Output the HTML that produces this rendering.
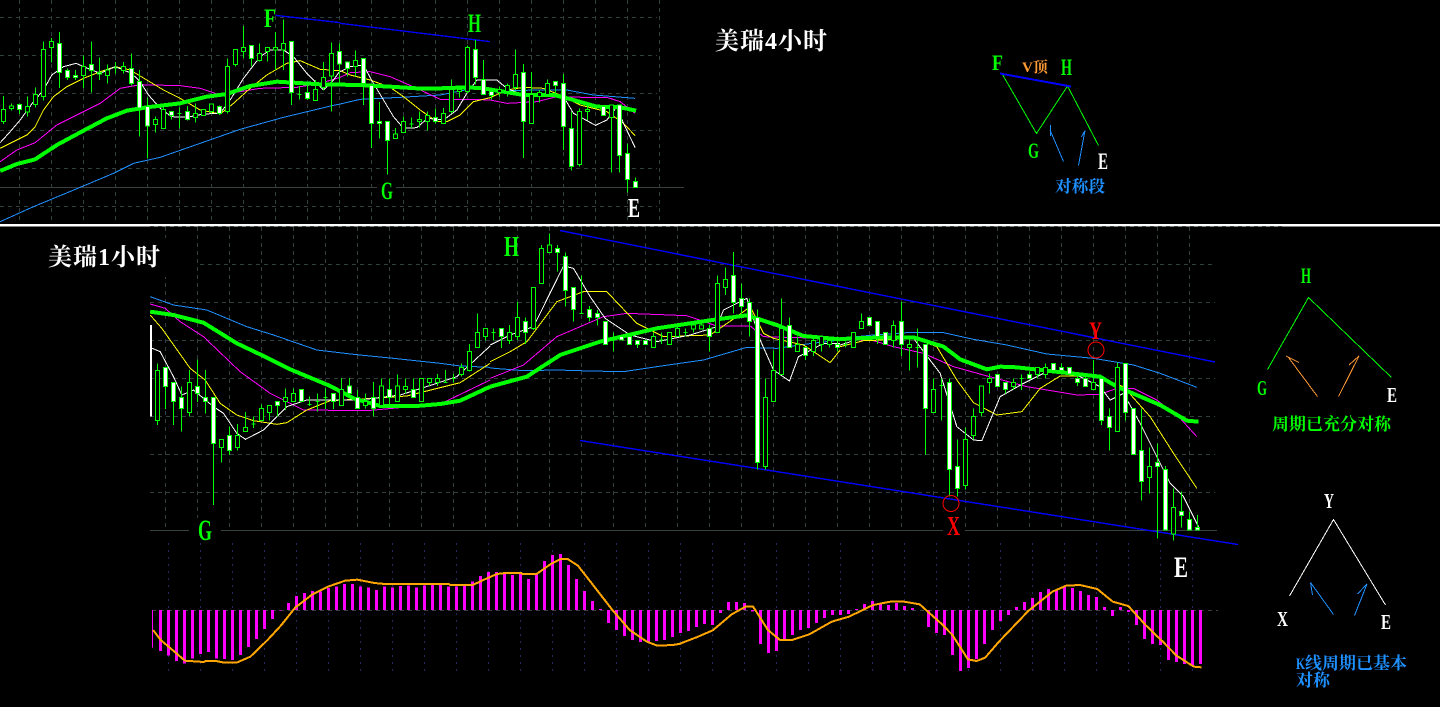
<!DOCTYPE html>
<html><head><meta charset="utf-8"><title>美瑞</title>
<style>
html,body{margin:0;padding:0;background:#000;width:1440px;height:707px;overflow:hidden}
svg{display:block}
.l{fill:none;stroke-width:3;shape-rendering:crispEdges;stroke-linejoin:round}
.g{fill:none;stroke:#2f3f3c;stroke-width:1;stroke-dasharray:4 4;shape-rendering:crispEdges}
.w{fill:none;stroke:#0f0;stroke-width:3;shape-rendering:crispEdges}
.h{fill:#000;stroke:#0f0;stroke-width:3;shape-rendering:crispEdges}
.f{fill:#fff;stroke:#0f0;stroke-width:3;shape-rendering:crispEdges}
.t{fill:none;stroke-width:1;shape-rendering:crispEdges}
.a{font-family:"Liberation Serif",serif;font-weight:bold}
.c{font-family:"Liberation Serif","Noto Serif CJK SC",serif;font-weight:bold}
</style></head><body>
<svg width="1440" height="707" viewBox="0 0 1440 707" xmlns="http://www.w3.org/2000/svg">
<rect width="1440" height="707" fill="#000"/>

<!-- top chart grid -->
<path class="g" d="M0 17.5H657M0 55.5H657M0 93.5H657M0 130.5H657M0 168.5H657M0 206.5H657"/>
<path class="g" d="M19.5 0V224M51.5 0V224M83.5 0V224M115.5 0V224M147.5 0V224M179.5 0V224M211.5 0V224M243.5 0V224M275.5 0V224M307.5 0V224M339.5 0V224M371.5 0V224M403.5 0V224M435.5 0V224M467.5 0V224M499.5 0V224M531.5 0V224M563.5 0V224M595.5 0V224M627.5 0V224M659.5 0V224"/>
<path d="M0 187.5H684" stroke="#3a3f3f" stroke-width="1" shape-rendering="crispEdges"/>

<!-- top chart MAs -->
<g transform="translate(.1667,0) scale(.33333)">
<path class="l" stroke="#1e90ff" d="M0 665L100 620L240 562L340 520L400 490L480 472L600 430L720 388L850 352L1000 316L1020 312"/>
<path class="l" stroke="#f0f" d="M0 485L50 450L105 428L170 375L250 335L300 310L360 265L420 254L540 257L600 265L660 285L720 275L780 265L890 262L960 250L1020 232"/>
<path class="l" stroke="#ff0" d="M0 445L40 425L80 405L105 380L130 330L160 290L200 260L250 235L300 215L345 200L390 210L440 240L490 270L540 295L600 330L660 342L700 310L750 265L800 225L860 190L900 182L960 208L1020 212"/>
<path class="l" stroke="#fff" d="M0 428L30 395L60 360L100 305L130 270L155 225L190 200L228 190L250 200L300 220L345 200L370 210L394 220L420 245L445 285L480 325L514 350L560 352L610 342L660 340L690 300L730 235L780 170L810 150L850 150L880 170L920 220L970 270L1000 240L1020 212"/>
<path class="l" stroke="#0f0" style="stroke-width:12" d="M0 513L50 492L105 478L170 435L250 392L320 355L380 332L440 322L540 310L620 290L680 282L750 258L830 245L880 248L960 253L1020 254"/>
<path class="l" stroke="#00f" style="stroke-width:4" d="M826 46L1020 68"/>
</g>
<g transform="translate(340.1667,0) scale(.33333)">
<path class="l" stroke="#1e90ff" d="M0 312L60 298L180 292L300 285L400 265L500 272L600 270L680 270L760 285L885 295"/>
<path class="l" stroke="#f0f" d="M0 232L30 218L90 215L150 230L230 265L300 298L390 298L450 300L500 310L590 305L650 290L730 292L800 292L840 305L885 340"/>
<path class="l" stroke="#ff0" d="M0 212L30 225L90 240L150 262L190 290L240 330L290 365L320 365L360 345L400 305L450 293L500 270L550 262L610 265L660 285L720 315L800 335L850 370L885 407"/>
<path class="l" stroke="#fff" d="M0 215L30 200L70 195L94 240L130 300L160 350L190 385L230 383L262 355L310 360L350 330L380 280L410 240L470 240L500 265L550 285L598 290L640 280L670 290L700 340L766 376L800 360L830 320L850 370L885 443"/>
<path class="l" stroke="#0f0" style="stroke-width:12" d="M0 254L60 255L150 260L230 265L300 265L380 262L430 265L490 275L550 285L640 285L700 300L770 320L840 322L888 332"/>
<path class="l" stroke="#00f" style="stroke-width:4" d="M0 70L450 125"/>
</g>

<!-- top chart candles -->
<g transform="translate(.1667,0) scale(.33333)">
<path class="w" d="M10 288V372M34 310V332M58 310V342M82 290V350M106 262V322M130 124V302M154 114V188M178 96V264M202 205V240M226 210V240M250 166V264M274 124V278M298 172V240M322 194V250M346 186V220M370 186V220M394 160V256M418 210V410M442 292V476M466 350V398M490 320V386M514 335V358M538 322V386M562 318V362M586 310V368M610 328V346M634 312V340M658 316V345M682 175V340M706 148V200M730 78V174M754 136V200M778 130V184M802 142V184M826 96V210M850 58V210M874 124V315M898 258V298M922 250V300M946 240V302M970 186V272M994 128V335M1018 130V250M340 204H352M532 340H544M892 284H904"/>
<path class="h" d="M4 328h12V364h-12zM28 318h12V326h-12zM76 320h12V336h-12zM100 284h12V314h-12zM124 148h12V290h-12zM148 124h12V142h-12zM244 200h12V226h-12zM316 210h12V226h-12zM364 200h12V212h-12zM460 358h12V374h-12zM484 328h12V386h-12zM580 340h12V352h-12zM604 328h12V346h-12zM628 312h12V334h-12zM676 199h12V334h-12zM700 148h12V194h-12zM724 142h12V155h-12zM772 160h12V182h-12zM796 142h12V155h-12zM820 142h12V150h-12zM844 130h12V150h-12zM940 268h12V302h-12zM964 232h12V262h-12zM988 160h12V228h-12z"/>
<path class="f" d="M52 314h12V328h-12zM172 130h12V218h-12zM196 212h12V232h-12zM220 227h12V232h-12zM268 194h12V212h-12zM292 218h12V222h-12zM388 206h12V250h-12zM412 244h12V324h-12zM436 320h12V378h-12zM508 335h12V346h-12zM556 335h12V358h-12zM652 320h12V340h-12zM748 136h12V176h-12zM868 124h12V277h-12zM916 278h12V296h-12zM1012 154h12V192h-12z"/>
</g>
<g transform="translate(340.1667,0) scale(.33333)">
<path class="w" d="M22 186V230M46 152V230M70 175V315M94 257V444M118 306V416M142 364V524M166 384V416M190 350V398M214 352V384M238 334V382M262 334V392M286 326V370M310 324V372M334 238V340M358 256V292M382 136V280M406 120V254M430 180V284M454 270V298M478 260V290M502 250V290M526 148V270M550 192V474M574 216V370M598 270V308M622 238V290M646 244V280M670 222V450M694 334V512M718 326V500M742 308V362M790 320V346M814 315V518M838 315V518M862 430V578M886 532V562M208 372H220"/>
<path class="h" d="M40 182h12V200h-12zM160 402h12V416h-12zM184 364h12V398h-12zM232 358h12V364h-12zM256 346h12V364h-12zM304 340h12V370h-12zM328 268h12V335h-12zM352 268h12V274h-12zM376 142h12V275h-12zM472 268h12V278h-12zM496 256h12V274h-12zM520 223h12V262h-12zM568 284h12V370h-12zM592 278h12V290h-12zM616 250h12V284h-12zM712 334h12V494h-12zM736 328h12V334h-12zM808 315h12V352h-12z"/>
<path class="f" d="M16 186h12V206h-12zM64 175h12V250h-12zM88 257h12V370h-12zM112 364h12V370h-12zM136 364h12V422h-12zM280 352h12V364h-12zM400 148h12V233h-12zM424 238h12V284h-12zM448 274h12V286h-12zM544 217h12V364h-12zM640 244h12V256h-12zM664 250h12V380h-12zM688 385h12V500h-12zM784 320h12V346h-12zM832 315h12V466h-12zM856 460h12V538h-12zM880 544h12V562h-12z"/>
</g>

<!-- divider -->
<rect x="0" y="224" width="1440" height="2.5" fill="#fff"/>

<!-- lower chart grid -->
<path class="g" d="M150 226.5H1286M200 264.5H1215M150 302.5H1215M150 340.5H1215M150 378.5H1215M150 416.5H1215M150 454.5H1215M150 492.5H1215"/>
<path class="g" d="M165.5 227V530M197.5 227V530M229.5 227V530M261.5 227V530M293.5 227V530M325.5 227V530M357.5 227V530M389.5 227V530M421.5 227V530M453.5 227V530M485.5 227V530M517.5 227V530M549.5 227V530M581.5 227V530M613.5 227V530M645.5 227V530M677.5 227V530M709.5 227V530M741.5 227V530M773.5 227V530M805.5 227V530M837.5 227V530M869.5 227V530M901.5 227V530M933.5 227V530M965.5 227V530M997.5 227V530M1029.5 227V530M1061.5 227V530M1093.5 227V530M1125.5 227V530M1157.5 227V530M1189.5 227V530"/>
<rect x="40" y="238" width="130" height="39" fill="#000"/>
<path d="M150 530.5H1217" stroke="#344240" stroke-width="1" shape-rendering="crispEdges"/>

<!-- indicator grid -->
<path fill="none" stroke="#24285a" stroke-width="1" stroke-dasharray="2 5" shape-rendering="crispEdges" d="M168.5 543V675M200.5 543V675M232.5 543V675M264.5 543V675M296.5 543V675M328.5 543V675M360.5 543V675M392.5 543V675M424.5 543V675M456.5 543V675M488.5 543V675M520.5 543V675M552.5 543V675M584.5 543V675M616.5 543V675M648.5 543V675M680.5 543V675M712.5 543V675M744.5 543V675M776.5 543V675M808.5 543V675M840.5 543V675M872.5 543V675M904.5 543V675M936.5 543V675M968.5 543V675M1000.5 543V675M1032.5 543V675M1064.5 543V675M1096.5 543V675M1128.5 543V675M1160.5 543V675M1192.5 543V675"/>
<path d="M152 610.5H1218" stroke="#3a3f3f" stroke-width="1" stroke-dasharray="4 4" shape-rendering="crispEdges"/>

<!-- lower chart MAs -->
<g transform="translate(140.1667,230) scale(.33333)">
<path class="l" stroke="#1e90ff" d="M30 200L100 225L200 240L320 290L400 315L530 360L640 373L760 385L900 400L960 408L1050 412"/>
<path class="l" stroke="#f0f" d="M30 222L75 235L120 275L190 320L300 425L390 490L490 540L680 542L900 522L1050 450"/>
<path class="l" stroke="#ff0" d="M30 255L65 295L150 415L195 450L240 520L290 555L340 572L410 583L440 578L500 540L570 512L700 505L800 498L880 478L960 458L1050 400"/>
<path class="l" stroke="#fff" d="M36 355L60 365L100 440L125 495L160 480L220 530L250 550L290 610L316 628L370 600L440 530L500 510L660 510L780 495L890 460L950 440L1050 348"/>
<path class="l" stroke="#0f0" style="stroke-width:12" d="M30 245L100 255L190 278L290 340L370 378L450 418L570 468L640 505L720 528L830 528L900 522L960 512L1050 470"/>
</g>
<g transform="translate(490.1667,230) scale(.33333)">
<path class="l" stroke="#1e90ff" d="M0 414L100 422L200 420L300 423L400 425L500 410L640 390L770 352L860 355L950 342L1050 330"/>
<path class="l" stroke="#f0f" d="M0 445L100 405L200 320L340 260L410 250L590 257L680 288L780 288L820 320L1000 325L1050 330"/>
<path class="l" stroke="#ff0" d="M0 395L60 365L110 335L200 215L280 185L350 185L440 280L520 320L660 315L740 260L780 230L820 310L850 325L940 345L1020 398L1050 360"/>
<path class="l" stroke="#fff" d="M0 345L60 315L130 290L220 108L250 115L300 200L345 265L420 315L500 335L600 315L680 290L700 240L770 205L810 330L850 420L898 453L925 380L1000 340L1050 340"/>
<path class="l" stroke="#0f0" style="stroke-width:12" d="M0 470L110 440L210 375L330 335L500 295L680 268L770 256L860 285L940 318L1050 328"/>
</g>
<g transform="translate(840.1667,230) scale(.33333)">
<path class="l" stroke="#1e90ff" d="M0 325L100 315L200 308L310 308L400 328L500 345L620 372L760 385L880 405L960 430L1070 472"/>
<path class="l" stroke="#f0f" d="M0 328L100 332L160 350L250 370L340 410L430 435L560 470L710 495L780 493L830 475L880 475L950 510L1020 565L1070 620"/>
<path class="l" stroke="#ff0" d="M0 350L70 332L130 330L220 325L290 350L350 450L400 518L470 555L545 545L600 475L660 438L760 437L850 470L930 560L1000 670L1070 775"/>
<path class="l" stroke="#fff" d="M0 345L80 320L220 325L300 430L350 590L400 630L425 632L480 500L550 460L620 425L700 430L780 470L810 510L850 490L900 580L950 680L990 760L1030 800L1075 890"/>
<path class="l" stroke="#0f0" style="stroke-width:12" d="M0 327L130 322L220 322L310 350L360 388L440 418L480 410L530 412L620 422L780 440L830 470L960 525L1040 572L1075 575"/>
</g>

<!-- channel lines -->
<path d="M560 230.5L1215 362M580 440.5L1238 544.5" fill="none" stroke="#00f" stroke-width="1.4" shape-rendering="crispEdges"/>

<!-- lower chart candles -->
<g transform="translate(140.1667,230) scale(.33333)">
<path d="M32 285V560" fill="none" stroke="#fff" stroke-width="6" shape-rendering="crispEdges"/>
<path class="w" d="M52 400V585M76 412V537M100 457V585M124 470V605M148 420V560M172 388V516M196 420V550M220 502V825M244 628V698M268 590V675M292 582V662M316 546V604M340 560V594M364 524V572M388 526V572M412 514V560M436 476V540M460 476V514M484 478V514M508 500V528M532 490V545M556 476V537M580 490V537M604 444V526M628 444V500M652 480V536M676 490V536M700 456V560M724 445V526M748 445V526M772 433V514M796 445V490M820 445V503M844 445V514M868 445V468M892 432V468M916 420V458M940 432V458M964 400V440M988 342V425M1012 250V352M1036 295V332M334 582H346M502 524H514M526 514H538M550 502H562M910 458H922M934 445H946"/>
<path class="h" d="M46 421h12V571h-12zM142 457h12V548h-12zM238 628h12V652h-12zM286 616h12V652h-12zM310 592h12V604h-12zM358 536h12V572h-12zM382 526h12V548h-12zM430 502h12V514h-12zM454 490h12V514h-12zM598 478h12V526h-12zM670 514h12V526h-12zM718 468h12V526h-12zM766 468h12V514h-12zM790 470h12V478h-12zM838 445h12V514h-12zM862 445h12V458h-12zM886 445h12V458h-12zM958 412h12V433h-12zM982 365h12V421h-12zM1006 307h12V352h-12zM1030 295h12V320h-12z"/>
<path class="f" d="M70 412h12V470h-12zM94 457h12V514h-12zM118 502h12V535h-12zM166 469h12V490h-12zM190 502h12V514h-12zM214 502h12V640h-12zM262 616h12V661h-12zM406 514h12V526h-12zM478 478h12V514h-12zM574 490h12V514h-12zM622 468h12V490h-12zM646 502h12V536h-12zM694 502h12V535h-12zM742 478h12V503h-12zM814 478h12V502h-12z"/>
</g>
<g transform="translate(490.1667,230) scale(.33333)">
<path class="w" d="M10 295V332M34 296V354M58 285V342M82 216V330M106 262V342M130 172V300M154 45V160M178 10V67M202 45V125M226 68V230M250 172V275M274 136V250M298 228V274M322 240V286M346 274V343M370 308V365M394 320V330M418 320V343M442 332V354M466 332V343M490 308V353M514 308V342M538 307V343M562 285V320M586 295V320M610 285V308M634 275V297M658 285V365M682 136V307M706 112V195M730 66V250M754 160V250M778 205V320M802 238V718M826 445V718M850 362V514M874 205V433M898 262V352M922 320V365M946 352V390M970 320V378M994 320V365M1018 320V352M1042 320V365M4 307H16M268 250H280M364 330H376M508 330H520M580 308H592"/>
<path class="h" d="M52 307h12V331h-12zM76 262h12V319h-12zM124 172h12V295h-12zM148 55h12V160h-12zM172 45h12V67h-12zM484 320h12V353h-12zM532 307h12V343h-12zM556 295h12V319h-12zM604 285h12V297h-12zM628 285h12V297h-12zM676 160h12V307h-12zM700 148h12V172h-12zM820 502h12V710h-12zM844 421h12V514h-12zM868 295h12V433h-12zM916 343h12V365h-12zM964 331h12V365h-12zM988 320h12V343h-12zM1012 331h12V343h-12z"/>
<path class="f" d="M28 296h12V319h-12zM100 274h12V307h-12zM196 55h12V67h-12zM220 79h12V181h-12zM244 172h12V238h-12zM292 238h12V262h-12zM316 250h12V262h-12zM340 274h12V343h-12zM388 320h12V330h-12zM412 320h12V343h-12zM436 332h12V343h-12zM460 332h12V343h-12zM652 296h12V319h-12zM724 136h12V217h-12zM748 205h12V229h-12zM772 217h12V274h-12zM796 262h12V697h-12zM892 286h12V352h-12zM940 352h12V376h-12zM1036 343h12V352h-12z"/>
</g>
<g transform="translate(840.1667,230) scale(.33333)">
<path class="w" d="M16 335V352M40 308V352M64 250V296M88 262V286M112 274V342M136 308V343M160 272V352M184 216V378M208 320V422M232 295V412M256 343V675M280 445V548M304 445V572M328 445V800M352 628V800M376 592V778M400 536V628M424 468V560M448 430V490M472 433V469M496 457V490M520 445V480M544 433V480M568 424V445M592 412V445M616 400V445M640 400V422M664 400V433M688 412V433M712 433V468M736 433V469M760 390V479M784 445V585M808 535V662M832 398V604M856 400V572M880 536V673M904 536V812M928 652V790M952 640V926M976 708V900M1000 775V932M1024 785V893M1048 844V900M1072 855V900M10 343H22M226 352H238M298 467H310M538 445H550"/>
<path class="h" d="M34 308h12V352h-12zM58 274h12V296h-12zM154 286h12V331h-12zM202 343h12V352h-12zM274 478h12V548h-12zM370 628h12V767h-12zM394 560h12V616h-12zM418 468h12V548h-12zM442 445h12V457h-12zM514 457h12V469h-12zM586 412h12V433h-12zM610 412h12V433h-12zM754 457h12V479h-12zM826 412h12V604h-12zM922 710h12V742h-12zM994 832h12V912h-12z"/>
<path class="f" d="M82 262h12V286h-12zM106 274h12V319h-12zM130 308h12V343h-12zM178 274h12V343h-12zM250 343h12V535h-12zM322 458h12V718h-12zM346 710h12V775h-12zM466 433h12V469h-12zM490 457h12V478h-12zM562 433h12V445h-12zM634 400h12V422h-12zM658 412h12V422h-12zM682 412h12V432h-12zM706 445h12V457h-12zM730 445h12V469h-12zM778 445h12V571h-12zM802 560h12V592h-12zM850 400h12V548h-12zM874 536h12V673h-12zM898 661h12V754h-12zM946 698h12V710h-12zM970 718h12V900h-12zM1018 844h12V856h-12zM1042 868h12V900h-12zM1066 893h12V900h-12z"/>
</g>

<!-- MACD bars -->
<g transform="translate(0,545) scale(1,.33333)">
<path d="M152.5 195V308" stroke="#f0f" stroke-width="1" fill="none" shape-rendering="crispEdges"/>
<path fill="none" stroke="#f0f" stroke-width="3" shape-rendering="crispEdges" d="M160.5 195V318M168.5 195V332M176.5 195V348M184.5 195V356M192.5 195V340M200.5 195V327M208.5 195V321M216.5 195V340M224.5 195V342M232.5 195V345M240.5 195V330M248.5 195V306M256.5 195V282M264.5 195V252M272.5 195V222M280.5 195V197M288.5 195V174M296.5 195V153M304.5 195V144M312.5 195V138M320.5 195V140M328.5 195V129M336.5 195V125M344.5 195V117M352.5 195V117M360.5 195V125M368.5 195V128M376.5 195V135M384.5 195V125M392.5 195V128M400.5 195V123M408.5 195V122M416.5 195V128M424.5 195V122M432.5 195V117M440.5 195V117M448.5 195V125M456.5 195V125M464.5 195V120M472.5 195V110M480.5 195V93M488.5 195V81M496.5 195V81M504.5 195V86M512.5 195V90M520.5 195V86M528.5 195V102M536.5 195V86M544.5 195V48M552.5 195V30M560.5 195V27M568.5 195V60M576.5 195V102M584.5 195V138M592.5 195V168M600.5 195V192M608.5 195V234M616.5 195V255M624.5 195V273M632.5 195V285M640.5 195V291M648.5 195V291M656.5 195V288M664.5 195V285M672.5 195V276M680.5 195V264M688.5 195V258M696.5 195V246M704.5 195V237M712.5 195V240M720.5 195V204M728.5 195V171M736.5 195V171M744.5 195V174M752.5 195V200M760.5 195V297M768.5 195V324M776.5 195V318M784.5 195V282M792.5 195V270M800.5 195V255M808.5 195V249M816.5 195V234M824.5 195V219M832.5 195V210M840.5 195V210M848.5 195V207M856.5 195V192M864.5 195V177M872.5 195V168M880.5 195V175M888.5 195V180M896.5 195V174M904.5 195V183M912.5 195V189M920.5 195V195M928.5 195V246M936.5 195V264M944.5 195V270M952.5 195V330M960.5 195V378M968.5 195V369M976.5 195V342M984.5 195V297M992.5 195V255M1000.5 195V228M1008.5 195V210M1016.5 195V186M1024.5 195V171M1032.5 195V159M1040.5 195V141M1048.5 195V132M1056.5 195V135M1064.5 195V126M1072.5 195V129M1080.5 195V138M1088.5 195V150M1096.5 195V156M1104.5 195V186M1112.5 195V213M1120.5 195V186M1128.5 195V201M1136.5 195V240M1144.5 195V282M1152.5 195V297M1160.5 195V300M1168.5 195V345M1176.5 195V351M1184.5 195V357M1192.5 195V361M1200.5 195V357"/>
</g>
<!-- signal line -->
<g transform="translate(140,545) scale(.34483,.33333)">
<path fill="none" stroke="#ffa500" stroke-width="6" shape-rendering="crispEdges" d="M38 255L60 285L100 320L130 347L185 351L190 348L220 348L245 353L280 353L320 335L370 285L410 240L450 188L500 148L545 125L595 107L630 104L680 114L710 117L895 117L900 120L965 120L1000 103L1035 87L1060 84L1105 84L1110 87L1150 87L1190 58L1220 42L1240 42L1270 62L1310 115L1370 195L1420 255L1470 290L1500 302L1545 300L1568 296"/>
</g>
<g transform="translate(680,545) scale(.34483,.33333)">
<path fill="none" stroke="#ffa500" stroke-width="6" shape-rendering="crispEdges" d="M0 296L50 276L95 256L150 208L190 185L212 185L255 255L290 285L325 285L375 268L440 230L490 215L560 180L610 170L650 170L695 178L760 238L790 270L835 343L860 348L885 338L925 290L1010 198L1080 140L1120 122L1160 120L1210 132L1255 170L1300 183L1350 240L1400 290L1440 332L1490 365L1512 367"/>
</g>

<!-- label backgrounds -->
<rect x="377" y="181" width="19" height="20" fill="#000"/>
<rect x="189" y="518" width="32" height="24" fill="#000"/>
<rect x="943" y="517" width="22" height="20" fill="#000"/>

<!-- red markers -->
<circle cx="1096" cy="350" r="8" fill="none" stroke="#f00" stroke-width="1"/>
<circle cx="951" cy="503.5" r="8" fill="none" stroke="#f00" stroke-width="1"/>

<!-- chart letters -->
<g class="a" text-anchor="start">
<text x="264" y="27" font-size="26" fill="#0f0" textLength="12" lengthAdjust="spacingAndGlyphs">F</text>
<text x="468" y="32" font-size="26" fill="#0f0" textLength="13" lengthAdjust="spacingAndGlyphs">H</text>
<text x="381" y="199" font-size="25" fill="#0f0" textLength="12" lengthAdjust="spacingAndGlyphs">G</text>
<text x="628" y="217" font-size="27" fill="#fff" textLength="12" lengthAdjust="spacingAndGlyphs">E</text>
<text x="504" y="256" font-size="29" fill="#0f0" textLength="15" lengthAdjust="spacingAndGlyphs">H</text>
<text x="198" y="540" font-size="30" fill="#0f0" textLength="14" lengthAdjust="spacingAndGlyphs">G</text>
<text x="1089" y="339" font-size="25" fill="#f00" textLength="13" lengthAdjust="spacingAndGlyphs">Y</text>
<text x="947" y="535" font-size="27" fill="#f00" textLength="13" lengthAdjust="spacingAndGlyphs">X</text>
<text x="1174" y="577" font-size="30" fill="#fff" textLength="14" lengthAdjust="spacingAndGlyphs">E</text>
<!-- diagram letters -->
<text x="992" y="70" font-size="22" fill="#0f0" textLength="11" lengthAdjust="spacingAndGlyphs">F</text>
<text x="1061" y="75" font-size="23" fill="#0f0" textLength="11" lengthAdjust="spacingAndGlyphs">H</text>
<text x="1028" y="158" font-size="22" fill="#0f0" textLength="11" lengthAdjust="spacingAndGlyphs">G</text>
<text x="1098" y="169" font-size="23" fill="#fff" textLength="10" lengthAdjust="spacingAndGlyphs">E</text>
<text x="1301" y="283" font-size="22" fill="#0f0" textLength="10" lengthAdjust="spacingAndGlyphs">H</text>
<text x="1257" y="395" font-size="21" fill="#0f0" textLength="10" lengthAdjust="spacingAndGlyphs">G</text>
<text x="1387" y="402" font-size="21" fill="#fff" textLength="10" lengthAdjust="spacingAndGlyphs">E</text>
<text x="1324" y="508" font-size="21" fill="#fff" textLength="10" lengthAdjust="spacingAndGlyphs">Y</text>
<text x="1277" y="626" font-size="21" fill="#fff" textLength="11" lengthAdjust="spacingAndGlyphs">X</text>
<text x="1381" y="629" font-size="21" fill="#fff" textLength="10" lengthAdjust="spacingAndGlyphs">E</text>
</g>

<!-- diagrams -->
<g class="t">
<path stroke="#0f0" d="M1002.5 74.5L1036.5 133.5L1067.5 86L1098.5 145.5"/>
<path stroke="#00f" stroke-width="2" d="M1000 73.5L1071 86.5"/>
<path stroke="#1e90ff" d="M1063.5 161.5L1050 130M1050.5 125V136M1078.5 165.5L1085 130.5L1081.5 137"/>
<path stroke="#0f0" d="M1267.5 369.5L1308.5 297.5L1391.5 377.5"/>
<path stroke="#f93" d="M1317.5 396.5L1288.5 357.5M1286 356L1299 362.5M1338.5 396.5L1359 356L1349 365"/>
<path stroke="#fff" d="M1289.5 596L1333.5 519.5L1385.5 605"/>
<path stroke="#1e90ff" d="M1333.5 614.5L1310.5 582.5L1312.5 595M1354.5 615.5L1367 584L1357.5 594"/>
</g>

<!-- captions -->
<g class="c">
<text x="715" y="49" font-size="24" fill="#fff" textLength="112">美瑞4小时</text>
<text x="48" y="265" font-size="24" fill="#fff" textLength="112">美瑞1小时</text>
<text x="1022" y="72" font-size="15" fill="#f93">V顶</text>
<text x="1055" y="192" font-size="16.7" fill="#1e90ff">对称段</text>
<text x="1272" y="430" font-size="17" fill="#0f0">周期已充分对称</text>
<text x="1296" y="669" font-size="16" fill="#1e90ff" textLength="9" lengthAdjust="spacingAndGlyphs">K</text>
<text x="1305" y="669" font-size="17" fill="#1e90ff">线周期已基本</text>
<text x="1296" y="686" font-size="17" fill="#1e90ff">对称</text>
</g>
</svg>
</body></html>
